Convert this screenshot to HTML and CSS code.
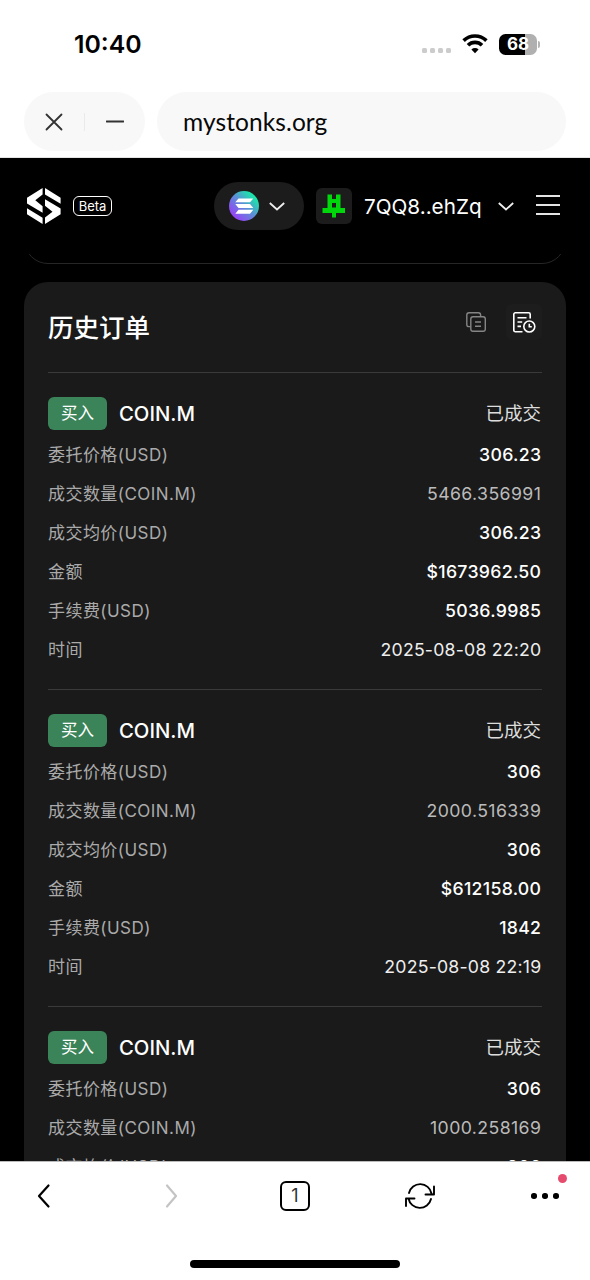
FILE: index.html
```html
<!DOCTYPE html>
<html lang="zh-CN">
<head>
<meta charset="utf-8">
<title>mystonks.org</title>
<link rel="stylesheet" href="styles.css">
</head>
<body>
<div class="phone">
  <div class="status">
    <span class="time">10:40</span>
    <div class="indicators">
      <div class="signal"><i></i><i></i><i></i><i></i></div>
      <svg class="wifi" viewBox="0 0 26 20" fill="none" stroke="#000" stroke-width="3.6"><path d="M1.6 6.6a16.3 16.3 0 0 1 22.8 0"/><path d="M6 11.2a10 10 0 0 1 14 0"/><path d="M13 19.2l-3.6-3.7a5.2 5.2 0 0 1 7.200 0z" fill="#000" stroke="none"/></svg>
      <div class="battery">68</div><i class="nub"></i>
    </div>
  </div>
  <div class="address">
    <div class="window">
      <svg width="18" height="18" viewBox="0 0 18 18"><path d="M1.500 1.500l15 15M16.500 1.500l-15 15"/></svg>
      <i class="split"></i>
      <svg width="18" height="18" viewBox="0 0 18 18"><path d="M.5 8.500h17"/></svg>
    </div>
    <div class="url">mystonks.org</div>
  </div>
  <main class="site">
    <header class="header">
      <svg class="logo" viewBox="0 0 34 36" fill="#fff"><path d="M15.600 0v6.500L8.300 12.300l7.300 6v6.500L0 15.500V9.700zM18 0l15.600 9.700v6L18 6.500zM0 20.300l15.600 9.400V36L0 26.200zM18 11.300l15.600 9.300v5.600L18 36v-6.400l7.500-5.800-7.500-6z"/></svg>
      <span class="beta">Beta</span>
      <div class="chain">
        <svg width="30" height="30" viewBox="0 0 30 30"><defs><linearGradient id="sol" x1="0.1" y1="0.9" x2="0.9" y2="0.1"><stop offset="0.1" stop-color="#9348f5"/><stop offset="0.5" stop-color="#5e8bd8"/><stop offset="0.9" stop-color="#1ce5ab"/></linearGradient></defs><circle cx="15" cy="15" r="15" fill="url(#sol)"/><path fill="#fff" d="M9.500 7.400h14.800L21 11.300H6.300zM6.300 13h14.700l3.300 3.900H9.500zM9.500 18.800h14.800L21 22.700H6.300z"/></svg>
        <svg class="caret" width="16" height="9" viewBox="0 0 16 9"><path d="M.8 1l7.200 6.500L15.200 1"/></svg>
      </div>
      <div class="avatar"><svg width="24" height="24" viewBox="0 0 24 24" fill="#00d80c"><path d="M5.500 .5h4.500v4.500h4V.5h4.500v13.500h4.500v5h-9v4.500h-4v-4.500H.5v-5h5zM10 9v4.500h4V9z" fill-rule="evenodd"/></svg></div>
      <span class="account">7QQ8..ehZq</span>
      <svg class="caret" width="16" height="9" viewBox="0 0 16 9"><path d="M.8 1l7.200 6.500L15.200 1"/></svg>
      <div class="menu"><i></i><i></i><i></i></div>
    </header>
    <div class="previous"><div class="previous-card"></div></div>
    <section class="card">
      <div class="heading">
        <h1>历史订单</h1>
        <div class="views">
          <svg class="copy" width="20" height="20" viewBox="0 0 20 20"><path d="M4.600 14.600H3A2.200 2.200 0 0 1 .8 12.400V3A2.200 2.200 0 0 1 3 .8h9.400A2.200 2.200 0 0 1 14.600 3v1.600"/><rect x="4.800" y="4.800" width="14.500" height="14.500" rx="2.200"/><path d="M9 10h6M9 14.200h6"/></svg>
          <div class="active"><svg width="23" height="21" viewBox="0 0 23 21"><path d="M17.200 6.500V2.300a1.500 1.500 0 0 0-1.500-1.500H2.300A1.500 1.500 0 0 0 .8 2.300v15.900a1.500 1.500 0 0 0 1.500 1.500h7.200M4.500 5.700h9M4.500 10h4.700M4.500 14.400H8"/><circle cx="16.300" cy="14.500" r="5.500"/><path d="M16.300 11.700v3h2.500"/></svg></div>
        </div>
      </div>
      <article class="order">
        <div class="top"><span class="side">买入</span><span class="symbol">COIN.M</span><span class="state">已成交</span></div>
        <dl>
          <div><dt>委托价格(USD)</dt><dd>306.23</dd></div>
          <div><dt>成交数量(COIN.M)</dt><dd class="quantity">5466.356991</dd></div>
          <div><dt>成交均价(USD)</dt><dd>306.23</dd></div>
          <div><dt>金额</dt><dd>$1673962.50</dd></div>
          <div><dt>手续费(USD)</dt><dd>5036.9985</dd></div>
          <div><dt>时间</dt><dd class="date">2025-08-08 22:20</dd></div>
        </dl>
      </article>
      <article class="order">
        <div class="top"><span class="side">买入</span><span class="symbol">COIN.M</span><span class="state">已成交</span></div>
        <dl>
          <div><dt>委托价格(USD)</dt><dd>306</dd></div>
          <div><dt>成交数量(COIN.M)</dt><dd class="quantity">2000.516339</dd></div>
          <div><dt>成交均价(USD)</dt><dd>306</dd></div>
          <div><dt>金额</dt><dd>$612158.00</dd></div>
          <div><dt>手续费(USD)</dt><dd>1842</dd></div>
          <div><dt>时间</dt><dd class="date">2025-08-08 22:19</dd></div>
        </dl>
      </article>
      <article class="order">
        <div class="top"><span class="side">买入</span><span class="symbol">COIN.M</span><span class="state">已成交</span></div>
        <dl>
          <div><dt>委托价格(USD)</dt><dd>306</dd></div>
          <div><dt>成交数量(COIN.M)</dt><dd class="quantity">1000.258169</dd></div>
          <div><dt>成交均价(USD)</dt><dd>306</dd></div>
        </dl>
      </article>
    </section>
  </main>
  <footer class="browser">
    <nav class="tools">
      <svg width="30" height="30" viewBox="0 0 30 30"><path d="M18.500 4.500L9 15l9.500 10.500"/></svg>
      <svg class="disabled" width="30" height="30" viewBox="0 0 30 30"><path d="M12 4.500L21 15l-9 10.500"/></svg>
      <span class="tabs">1</span>
      <svg class="reload" width="30" height="30" viewBox="0 0 30 30"><path d="M4 12A11.500 11.500 0 0 1 26.500 12.500M29 5.500v8h-8.500M26 18A11.500 11.500 0 0 1 3.500 17.500M1 25v-7.500h8.500"/></svg>
      <span class="more"><i></i><i></i><i></i><b></b></span>
    </nav>
    <div class="home"></div>
  </footer>
</div>
</body>
</html>
```
FILE: styles.css
```css
* { box-sizing: border-box; }
body { margin: 0; font-family: Inter, "Noto Sans CJK SC", sans-serif; background: #fff; }
svg { display: block; flex: none; }
.phone { width: 590px; height: 1280px; display: flex; flex-direction: column; overflow: hidden; background: #fff; }

.status { height: 92px; flex: none; display: flex; justify-content: space-between; align-items: flex-start; padding: 29px 50px 0 74px; }
.time { font-size: 24.800px; line-height: 30px; font-weight: 600; }
.indicators { display: flex; align-items: center; height: 30px; }
.signal { display: flex; gap: 3px; margin: 13px 11px 0 0; }
.signal i { width: 5px; height: 5px; border-radius: 1.5px; background: #ccc; }
.wifi { width: 26px; height: 20px; margin-right: 11px; }
.battery { width: 38px; height: 21px; border-radius: 6.5px; background: linear-gradient(90deg, #000 68%, #b0b0b0 68%); color: #fff; font-size: 17px; line-height: 21px; font-weight: 700; text-align: center; }
.nub { width: 2px; height: 7px; margin-left: 1px; background: #b4b4b4; border-radius: 0 2px 2px 0; }

.address { height: 66px; flex: none; display: flex; gap: 12px; padding: 0 24px 6px; border-bottom: 1px solid #e4e4e4; }
.window { width: 121px; border-radius: 30px; background: #f8f8f8; display: flex; align-items: center; justify-content: center; gap: 21px; padding-top: 1px; }
.window svg { stroke: #333; stroke-width: 1.8; stroke-linecap: round; }
.split { width: 1px; height: 18px; background: #eaeaea; }
.url { flex: 1; border-radius: 30px; background: #f8f8f8; padding-left: 26px; font: 24.500px/59px Lato, sans-serif; letter-spacing: .1px; color: #080808; }

.site { height: 1003px; flex: none; overflow: hidden; background: #000; color: #fff; }
.header { height: 96px; display: flex; align-items: center; padding: 0 30px 0 27px; }
.logo { width: 34px; height: 36px; }
.beta { width: 39px; height: 20px; margin-left: 12px; border: 1.5px solid #fff; border-radius: 6px; font-size: 13px; line-height: 19px; text-align: center; }
.chain { width: 90px; height: 48px; margin-left: 102px; border-radius: 24px; background: #1c1c1c; display: flex; align-items: center; gap: 10px; padding-left: 15px; }
.caret { fill: none; stroke: #eee; stroke-width: 1.8; }
.avatar { width: 36px; height: 36px; margin-left: 12px; border-radius: 6px; background: #1c1c1c; display: flex; align-items: center; justify-content: center; }
.account { width: 134px; margin-left: 12px; font-size: 20.700px; line-height: 30px; padding-top: 1px; }
.menu { display: flex; flex-direction: column; gap: 7px; margin: -2px 0 0 auto; }
.menu i { width: 24px; height: 2px; background: #e4e4e4; }
.previous { height: 10px; overflow: hidden; padding: 0 24px; display: flex; align-items: flex-end; }
.previous-card { flex: none; width: 100%; height: 60px; border: 1.500px solid #262626; border-radius: 24px; }

.card { margin: 18px 24px 0; padding: 0 24px; border-radius: 24px; background: #1a1a1a; }
.heading { height: 90px; display: flex; justify-content: space-between; }
h1 { margin: 28px 0 0; font-size: 25.5px; line-height: 36px; font-weight: 500; }
.views { display: flex; align-items: center; height: 36px; gap: 20px; margin-top: 22px; }
.views svg { fill: none; stroke: #fff; stroke-width: 1.6; }
.views .copy { stroke: #858585; stroke-width: 1.4; }
.active { width: 36px; height: 36px; border-radius: 6px; background: #1d1d1d; display: flex; align-items: center; justify-content: center; }
.order { height: 317px; border-top: 1.500px solid #3a3a3a; padding-top: 24px; }
.top { height: 33px; display: flex; align-items: center; }
.side { width: 59px; height: 33px; border-radius: 6px; background: #3b8358; font-size: 16.5px; line-height: 33px; text-align: center; }
.symbol { margin-left: 12px; font-size: 20.300px; font-weight: 450; line-height: 33px; }
.state { margin: 0 1px 0 auto; font-size: 18.500px; line-height: 33px; color: #ddd; }
dl { margin: 6px 0 0; }
dl div { height: 39px; display: flex; align-items: center; justify-content: space-between; }
dt { font-size: 17px; line-height: 39px; color: #aaa; letter-spacing: .45px; }
dd { margin: 0 .700px 0 0; font-size: 17.700px; line-height: 37px; padding-bottom: 2px; font-weight: 500; color: #fff; letter-spacing: .3px; }
.quantity { color: #bbb; font-weight: 400; letter-spacing: .4px; }
.date { color: #eee; font-weight: 400; letter-spacing: .2px; }

.browser { height: 119px; flex: none; border-top: 1px solid #bbb; display: flex; flex-direction: column; justify-content: space-between; align-items: center; padding-bottom: 12px; }
.tools { width: 100%; display: flex; justify-content: space-between; align-items: center; padding: 19px 30px 0; }
.tools svg { fill: none; stroke: #000; stroke-width: 2.2; stroke-linecap: round; stroke-linejoin: round; }
.tools .disabled { stroke: #c4c4c4; }
.tools .reload { stroke-width: 1.900; }
.tabs { width: 30px; height: 30px; border: 2px solid #000; border-radius: 6px; font-size: 18px; line-height: 26px; text-align: center; color: #333; }
.more { width: 30px; height: 30px; display: flex; align-items: center; justify-content: center; gap: 5.500px; position: relative; }
.more i { width: 5.500px; height: 5.500px; flex: none; border-radius: 50%; background: #000; }
.more b { position: absolute; width: 9px; height: 9px; border-radius: 50%; background: #e64b6d; right: -7px; top: -7px; }
.home { width: 210px; height: 8px; border-radius: 4px; background: #000; }
```
